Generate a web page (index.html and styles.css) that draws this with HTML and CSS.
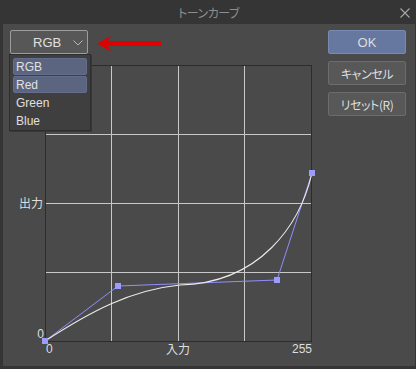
FILE: index.html
```html
<!DOCTYPE html>
<html lang="ja">
<head>
<meta charset="utf-8">
<link rel="stylesheet" href="styles.css">
</head>
<body>
<div class="window">
  <div class="titlebar">
    <span class="title">トーンカーブ</span>
    <svg class="close" width="10" height="10" viewBox="0 0 10 10"><path d="M0.5 0.5 L9.5 9.5 M9.5 0.5 L0.5 9.5" stroke="#a8a8a8" stroke-width="1.1" fill="none"/></svg>
  </div>
  <div class="dialog">
    <div class="left">
      <div class="toprow">
        <div class="select">
          <span class="select-text">RGB</span>
          <svg class="chev" width="10" height="6" viewBox="0 0 10 6"><path d="M0.5 0.5 L5 5 L9.5 0.5" stroke="#b8b8b8" stroke-width="1" fill="none"/></svg>
        </div>
        <svg class="arrow" width="64" height="17" viewBox="0 0 64 17"><polygon points="0,8.5 14,1 11,6 64,6 64,11 11,11 14,16.5" fill="#e00000"/></svg>
      </div>
      <svg class="chart" width="308" height="300" viewBox="10 65 308 300">
        <g stroke="#c8c8c8" stroke-width="1">
          <line x1="111.5" y1="65" x2="111.5" y2="341"/>
          <line x1="178.5" y1="65" x2="178.5" y2="341"/>
          <line x1="244.5" y1="65" x2="244.5" y2="341"/>
          <line x1="45" y1="134.5" x2="311" y2="134.5"/>
          <line x1="45" y1="203.5" x2="311" y2="203.5"/>
          <line x1="45" y1="272.5" x2="311" y2="272.5"/>
        </g>
        <rect x="45.5" y="65.5" width="266" height="276" fill="none" stroke="#2c2c2c" stroke-width="1"/>
        <polyline points="45,341 118,286 277,280 312,173" fill="none" stroke="#8f8fff" stroke-width="1"/>
        <path d="M45,341 C90,312 130,290 180,285 C260,283 300,225 312,173" fill="none" stroke="#ececec" stroke-width="1.1"/>
        <g fill="#9c9cff">
          <rect x="42" y="338" width="6" height="6"/>
          <rect x="115" y="283" width="6" height="6"/>
          <rect x="274" y="277" width="6" height="6"/>
          <rect x="309" y="170" width="6" height="6"/>
        </g>
        <g class="lbl" fill="#dedede">
          <text x="43" y="207.5" text-anchor="end" class="jp">出力</text>
          <text x="44" y="338" text-anchor="end">0</text>
          <text x="46" y="353">0</text>
          <text x="178" y="353.5" text-anchor="middle" class="jp">入力</text>
          <text x="312" y="353" text-anchor="end">255</text>
        </g>
      </svg>
      <ul class="menu">
        <li class="item sel">RGB</li>
        <li class="item sel">Red</li>
        <li class="item">Green</li>
        <li class="item">Blue</li>
      </ul>
    </div>
    <div class="buttons">
      <div class="btn ok">OK</div>
      <div class="btn jp">キャンセル</div>
      <div class="btn jp">リセット(R)</div>
    </div>
  </div>
</div>
</body>
</html>
```

FILE: styles.css
```css
html, body {
  margin: 0;
  padding: 0;
  background: #353535;
}
body {
  width: 416px;
  height: 369px;
  overflow: hidden;
  font-family: "Liberation Sans", "Noto Sans CJK JP", sans-serif;
  color: #dedede;
}
.window {
  width: 416px;
  height: 369px;
  display: flex;
  flex-direction: column;
}
.titlebar {
  height: 24px;
  position: relative;
  display: flex;
  align-items: center;
  justify-content: center;
  background: #353535;
}
.title {
  font-family: "Noto Sans CJK JP", sans-serif;
  font-size: 12px;
  color: #8e8e8e;
  font-feature-settings: "palt";
  letter-spacing: -0.5px;
  margin-left: 1px;
}
.close {
  position: absolute;
  right: 6px;
  top: 8px;
}
.dialog {
  margin-left: 3px;
  width: 412px;
  height: 342px;
  background: #4a4a4a;
  display: flex;
  box-sizing: border-box;
  padding: 6px 9px 0 0;
}
.left {
  position: relative;
  flex: 0 0 auto;
  display: flex;
  flex-direction: column;
}
.toprow {
  display: flex;
  align-items: flex-start;
  margin-left: 7px;
}
.select {
  width: 78px;
  height: 24px;
  box-sizing: border-box;
  border: 1px solid #9c9c9c;
  border-radius: 2px;
  background: #575757;
  display: flex;
  align-items: center;
  position: relative;
}
.select-text {
  font-size: 13px;
  color: #e0e0e0;
  margin-left: 22px;
}
.chev {
  position: absolute;
  right: 4px;
  top: 9px;
}
.arrow {
  margin-left: 9px;
  margin-top: 5px;
}
.chart {
  display: block;
  margin-left: 7px;
  margin-top: 11px;
}
.lbl text {
  font-family: "Liberation Sans", sans-serif;
  font-size: 12px;
}
.lbl text.jp {
  font-family: "Noto Sans CJK JP", sans-serif;
  font-size: 12px;
}
.menu {
  position: absolute;
  left: 6px;
  top: 24px;
  width: 82px;
  height: 77px;
  margin: 0;
  padding: 3px 3px 0 3px;
  box-sizing: border-box;
  list-style: none;
  background: #3f3f3f;
  border: 1px solid #2e2e2e;
  box-shadow: 1px 1px 0 #383838;
}
.item {
  height: 17px;
  margin-bottom: 1px;
  box-sizing: border-box;
  padding-left: 2px;
  font-size: 12px;
  line-height: 16px;
  color: #e0e0e0;
  border: 1px solid transparent;
  border-radius: 2px;
}
.item.sel {
  background: #5c6580;
  border-color: #646e8a;
}
.buttons {
  margin-left: auto;
  display: flex;
  flex-direction: column;
  gap: 7px;
}
.btn {
  width: 78px;
  height: 24px;
  box-sizing: border-box;
  border: 1px solid #6c6c6c;
  border-radius: 2px;
  background: #585858;
  display: flex;
  align-items: center;
  justify-content: center;
  font-size: 12px;
  color: #dedede;
}
.btn.jp {
  font-family: "Noto Sans CJK JP", sans-serif;
  font-feature-settings: "palt";
  letter-spacing: -0.4px;
}
.btn.ok {
  background: #6677a0;
  border-color: #7a89b0;
  font-size: 13px;
}
```
